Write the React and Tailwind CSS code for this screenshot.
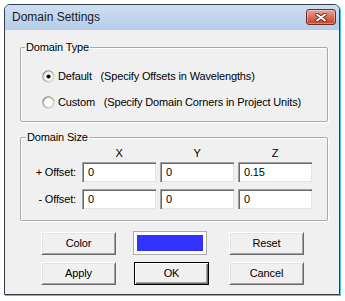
import React from "react";

const FONT = "font-['Liberation_Sans',Arial,sans-serif]";

function Radio({ checked }) {
  return (
    <svg width="13" height="13" viewBox="0 0 13 13" className="shrink-0">
      <defs>
        <linearGradient id={checked ? "rg1" : "rg2"} x1="0" y1="0" x2="1" y2="1">
          <stop offset="0" stopColor="#6f6f6f" />
          <stop offset="1" stopColor="#e8e8e8" />
        </linearGradient>
      </defs>
      <circle cx="6.5" cy="6.5" r="5.6" fill="#fff" stroke={`url(#${checked ? "rg1" : "rg2"})`} strokeWidth="1.2" />
      <circle cx="6.5" cy="6.5" r="4.4" fill="none" stroke="#dcdcdc" strokeWidth="0.9" />
      {checked && <circle cx="6.5" cy="6.5" r="2.1" fill="#000" />}
    </svg>
  );
}

function Btn({ children, def, className = "" }) {
  const edge = def
    ? "border border-black shadow-[inset_1px_1px_0_#fff,inset_-1px_-1px_0_#696969,inset_-2px_-2px_0_#a0a0a0]"
    : "border-t border-l border-white border-r border-b border-r-[#696969] border-b-[#696969] shadow-[inset_1px_1px_0_#e3e3e3,inset_-1px_-1px_0_#a0a0a0]";
  return (
    <div className={`w-[75px] h-[23px] bg-[#f0f0f0] flex items-center justify-center text-[11px] text-black ${edge} ${className}`}>
      {children}
    </div>
  );
}

function Field({ value }) {
  return (
    <div className="w-[74px] h-[20px] bg-white border-t border-l border-[#a0a0a0] border-r-white border-b-white shadow-[inset_1px_1px_0_#696969,inset_-1px_-1px_0_#e3e3e3] pl-[5px] flex items-center text-[11px] text-black">
      {value}
    </div>
  );
}

const GROUP = "border border-[#a9a9a9] rounded-[2px] shadow-[inset_1px_1px_0_#fff,1px_1px_0_#fff]";

export default function App() {
  return (
    <div className={`w-[345px] h-[301px] bg-white overflow-hidden pl-[4px] pt-[4px] ${FONT}`}>
      <div className="w-[336px] h-[291px] flex flex-col border border-[#333d48] rounded-t-[6px] shadow-[1px_1px_0_#4cc3ec] bg-[#f0f0f0] overflow-hidden">
        {/* title bar */}
        <div className="h-[25px] shrink-0 flex justify-between bg-linear-to-b from-[#cddff4] via-[#c0d5ee] to-[#b6cde9] pl-[7px] pr-[3px]">
          <div className="text-[12px] leading-[25px] text-[#1b1b1b]">Domain Settings</div>
          <div className="mt-[4px] w-[30px] h-[16px] rounded-[3px] border border-[#6b2c22] bg-linear-to-b from-[#eaa696] via-[#d86f57] to-[#c5412a] shadow-[inset_0_0_0_1px_rgba(255,255,255,0.35)] flex items-center justify-center">
            <svg width="12" height="9" viewBox="0 0 12 9">
              <path d="M2 1.5 L10 7.5 M10 1.5 L2 7.5" stroke="#5a2a24" strokeWidth="3.6" strokeLinecap="round" />
              <path d="M2 1.5 L10 7.5 M10 1.5 L2 7.5" stroke="#fff" strokeWidth="2" strokeLinecap="round" />
            </svg>
          </div>
        </div>

        {/* client */}
        <div className="flex-1 pl-[15px] pt-[11px] text-[11px] text-black tracking-[-0.15px]">
          <fieldset className={`w-[308px] pb-[12px] ${GROUP}`}>
            <legend className="ml-[4px] px-[1px] leading-[13px]">Domain Type</legend>
            <div className="pt-[15px] pl-[21px] flex items-center gap-[3px] leading-[14px]">
              <Radio checked />
              <span className="whitespace-pre">Default   (Specify Offsets in Wavelengths)</span>
            </div>
            <div className="mt-[12px] pl-[21px] flex items-center gap-[3px] leading-[14px]">
              <Radio />
              <span className="whitespace-pre">Custom   (Specify Domain Corners in Project Units)</span>
            </div>
          </fieldset>

          <fieldset className={`w-[308px] mt-[9px] pb-[11px] ${GROUP}`}>
            <legend className="ml-[5px] px-[1px] leading-[13px]">Domain Size</legend>
            <div className="pt-[3px] pl-[61px] flex gap-[4px] leading-[13px]">
              {["X", "Y", "Z"].map((h) => (
                <div key={h} className="w-[74px] text-center">{h}</div>
              ))}
            </div>
            <div className="mt-[2px] flex items-center">
              <div className="w-[55px] text-right">+ Offset:</div>
              <div className="ml-[6px] flex gap-[4px]">
                <Field value="0" />
                <Field value="0" />
                <Field value="0.15" />
              </div>
            </div>
            <div className="mt-[7px] flex items-center">
              <div className="w-[55px] text-right">- Offset:</div>
              <div className="ml-[6px] flex gap-[4px]">
                <Field value="0" />
                <Field value="0" />
                <Field value="0" />
              </div>
            </div>
          </fieldset>

          <div className="mt-[10px] pl-[21px] flex items-start">
            <Btn className="mt-[1px]">Color</Btn>
            <div className="ml-[17px] w-[74px] h-[24px] border border-[#acacac] bg-white p-[3px]">
              <div className="w-full h-full bg-[#3333ff]" />
            </div>
            <Btn className="mt-[1px] ml-[22px]">Reset</Btn>
          </div>
          <div className="mt-[7px] pl-[21px] flex">
            <Btn>Apply</Btn>
            <Btn def className="ml-[18px]">OK</Btn>
            <Btn className="ml-[20px]">Cancel</Btn>
          </div>
        </div>
      </div>
    </div>
  );
}
